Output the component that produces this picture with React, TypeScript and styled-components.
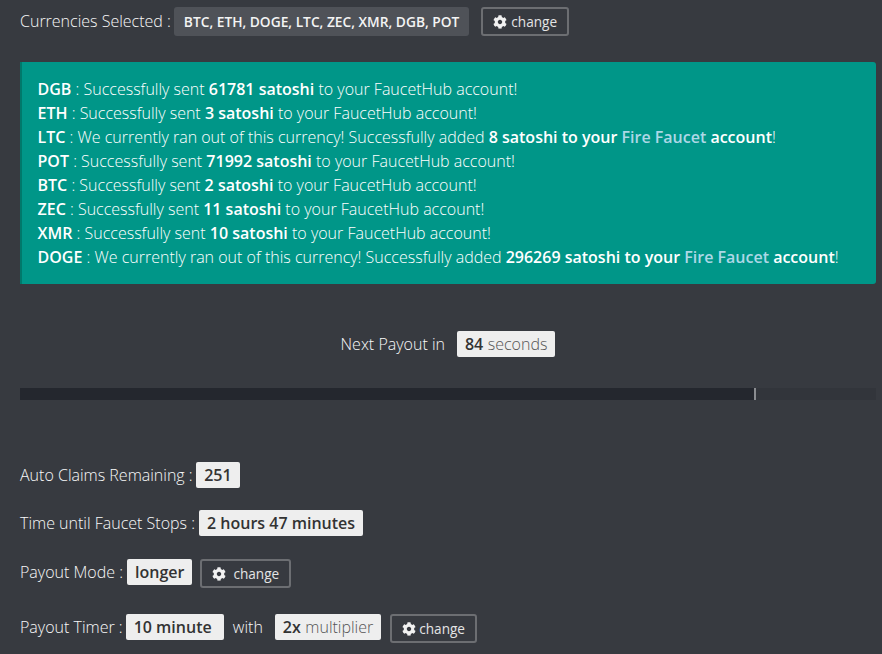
import React from "react";
import styled, { createGlobalStyle } from "styled-components";
import { FaCog } from "react-icons/fa";

const Global = createGlobalStyle`
  html, body {
    margin: 0;
    background: #373a40;
  }
  body {
    font-family: "Open Sans", "Liberation Sans", sans-serif;
    font-size: 16px;
    font-weight: 300;
    color: #f8f8f8;
    overflow: hidden;
  }
`;

const Page = styled.div`
  width: 882px;
  height: 654px;
  box-sizing: border-box;
  padding: 7px 6px 0 20px;
  overflow: hidden;
`;

const Row = styled.div<{ $top?: number; $center?: boolean }>`
  display: flex;
  align-items: flex-start;
  margin-top: ${(p) => p.$top ?? 0}px;
  justify-content: ${(p) => (p.$center ? "center" : "flex-start")};
  white-space: nowrap;
`;

const Label = styled.span<{ $gap?: number; $tall?: boolean }>`
  margin-right: ${(p) => p.$gap ?? 4}px;
  line-height: ${(p) => (p.$tall ? 29 : 26)}px;
`;

const DarkTag = styled.span`
  display: inline-flex;
  align-items: center;
  height: 29px;
  padding: 0 10px;
  background: #4f5258;
  border-radius: 3px;
  font-size: 13.75px;
  font-weight: 600;
  color: #f4f4f4;
`;

const Tag = styled.span<{ $gap?: number }>`
  display: inline-flex;
  align-items: center;
  height: 26px;
  padding: 0 8px;
  margin-right: ${(p) => p.$gap ?? 0}px;
  background: #eeeeee;
  border-radius: 2px;
  font-weight: 600;
  color: #333;
  small {
    font-size: 16px;
    font-weight: 300;
    color: #555;
    margin-left: 4.5px;
  }
`;

const ChangeButton = styled.button<{ $left: number; $iconGap: number; $pad: number }>`
  display: inline-flex;
  align-items: center;
  gap: ${(p) => p.$iconGap}px;
  height: 29px;
  box-sizing: border-box;
  margin: 0 0 0 ${(p) => p.$left}px;
  padding: 0 ${(p) => p.$pad}px;
  background: transparent;
  border: 2px solid #6c6e72;
  border-radius: 3px;
  font: inherit;
  font-size: 13.6px;
  font-weight: 400;
  color: #e4e4e4;
  svg {
    width: 14px;
    height: 14px;
    color: #f1f1f1;
  }
`;

const Alert = styled.div`
  margin-top: 26px;
  padding: 15px 16px 15px 15.5px;
  background: #009688;
  border-left: 2px solid #00796b;
  border-radius: 0 3px 3px 0;
  color: #fff;
  line-height: 24px;
  white-space: nowrap;
  b {
    font-weight: 600;
    color: #fff;
  }
  a {
    font-weight: 600;
    color: #add8e6;
  }
`;

const Track = styled.div`
  height: 12px;
  margin-top: 31px;
  background: #32353b;
`;

const Fill = styled.div`
  height: 100%;
  box-sizing: border-box;
  background: #24272e;
  border-right: 2px solid #8a8c90;
`;

type Message = { coin: string; text: React.ReactNode };

const messages: Message[] = [
  { coin: "DGB", text: <>Successfully sent <b>61781 satoshi</b> to your FaucetHub account!</> },
  { coin: "ETH", text: <>Successfully sent <b>3 satoshi</b> to your FaucetHub account!</> },
  {
    coin: "LTC",
    text: <>We currently ran out of this currency! Successfully added <b>8 satoshi to your</b> <a>Fire Faucet</a> <b>account</b>!</>,
  },
  { coin: "POT", text: <>Successfully sent <b>71992 satoshi</b> to your FaucetHub account!</> },
  { coin: "BTC", text: <>Successfully sent <b>2 satoshi</b> to your FaucetHub account!</> },
  { coin: "ZEC", text: <>Successfully sent <b>11 satoshi</b> to your FaucetHub account!</> },
  { coin: "XMR", text: <>Successfully sent <b>10 satoshi</b> to your FaucetHub account!</> },
  {
    coin: "DOGE",
    text: <>We currently ran out of this currency! Successfully added <b>296269 satoshi to your</b> <a>Fire Faucet</a> <b>account</b>!</>,
  },
];

const App = () => (
  <>
    <Global />
    <Page>
      <Row>
        <Label $tall $gap={3}>Currencies Selected :</Label>
        <DarkTag>BTC, ETH, DOGE, LTC, ZEC, XMR, DGB, POT</DarkTag>
        <ChangeButton $left={12} $iconGap={4} $pad={10}>
          <FaCog />
          change
        </ChangeButton>
      </Row>

      <Alert>
        {messages.map((m) => (
          <div key={m.coin}>
            <b>{m.coin}</b> : {m.text}
          </div>
        ))}
      </Alert>

      <Row $top={47} $center>
        <Label $gap={12}>Next Payout in</Label>
        <Tag>
          84<small>seconds</small>
        </Tag>
      </Row>

      <Track>
        <Fill style={{ width: `${(736 / 856) * 100}%` }} />
      </Track>

      <Row $top={62}>
        <Label $gap={3.5}>Auto Claims Remaining :</Label>
        <Tag>251</Tag>
      </Row>

      <Row $top={22}>
        <Label>Time until Faucet Stops :</Label>
        <Tag>2 hours 47 minutes</Tag>
      </Row>

      <Row $top={23}>
        <Label>Payout Mode :</Label>
        <Tag>longer</Tag>
        <ChangeButton $left={8} $iconGap={7} $pad={10}>
          <FaCog />
          change
        </ChangeButton>
      </Row>

      <Row $top={26}>
        <Label $gap={3}>Payout Timer :</Label>
        <Tag $gap={9}>10 minute&nbsp;</Tag>
        <Label $gap={12}>with</Label>
        <Tag $gap={9}>
          2x<small>multiplier</small>
        </Tag>
        <ChangeButton $left={0} $iconGap={3} $pad={10}>
          <FaCog />
          change
        </ChangeButton>
      </Row>
    </Page>
  </>
);

export default App;
